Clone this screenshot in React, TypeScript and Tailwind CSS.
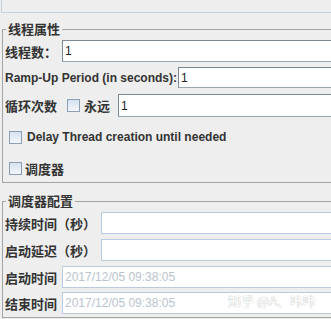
import React from "react";

const cjk = { fontFamily: '"Noto Sans CJK SC", "Liberation Sans", sans-serif' };
const lat = { fontFamily: '"Liberation Sans", Arial, sans-serif' };

function Label({ text, w }: { text: string; w: string }) {
  return (
    <span
      className={`${w} shrink-0 whitespace-nowrap text-[13px] font-bold leading-none text-[#333333]`}
      style={cjk}
    >
      {text}
    </span>
  );
}

function Field({ value, variant }: { value: string; variant: "dark" | "light" | "disabled" }) {
  const cls =
    variant === "dark"
      ? "border-t-[#7a8a99] border-l-[#7a8a99] border-b-[#9aa7b3] border-r-[#9aa7b3] text-[#222222]"
      : variant === "light"
      ? "border-[#b8cbe0] text-[#222222]"
      : "border-[#b8cbe0] text-[#b9c4cf]";
  return (
    <div
      className={`h-full flex-1 min-w-0 border bg-white pl-[2px] flex items-center text-[12px] leading-none ${cls}`}
      style={lat}
    >
      {value}
    </div>
  );
}

function Check() {
  return (
    <span className="h-[13px] w-[13px] shrink-0 border border-[#8b9fb4] bg-gradient-to-b from-[#d6e2ee] to-[#f3f6fa]" />
  );
}

export default function App() {
  return (
    <div className="relative h-[319px] w-[331px] overflow-hidden bg-[#eeeeee]">
      <div className="ml-[1px] h-[13px] border-b border-l border-[#c3d2e0]" />

      <fieldset className="ml-[2px] mt-[8px] w-[420px] border border-[#a3a3a3] px-[2px] pb-[2px]">
        <legend className="ml-[1px] px-[2px] text-[13px] font-bold leading-[16px] text-[#333333]" style={cjk}>
          线程属性
        </legend>
        <div className="mt-[3px] flex h-[22px] items-center">
          <Label text="线程数：" w="w-[57px]" />
          <Field value="1" variant="dark" />
        </div>
        <div className="mt-[5px] flex h-[21px] items-center">
          <span
            className="w-[173px] shrink-0 whitespace-nowrap text-[12px] font-bold leading-none text-[#333333]"
            style={lat}
          >
            Ramp-Up Period (in seconds):
          </span>
          <Field value="1" variant="dark" />
        </div>
        <div className="mt-[6px] flex h-[23px] items-center">
          <Label text="循环次数" w="w-[62px]" />
          <Check />
          <span className="ml-[4px] w-[34px] shrink-0 text-[13px] font-bold leading-none text-[#333333]" style={cjk}>
            永远
          </span>
          <Field value="1" variant="dark" />
        </div>
        <div className="mt-[8px] flex h-[24px] items-center pl-[4px]">
          <Check />
          <span className="ml-[5px] whitespace-nowrap text-[12px] font-bold leading-none text-[#333333]" style={lat}>
            Delay Thread creation until needed
          </span>
        </div>
        <div className="mt-[7px] flex h-[24px] items-center pl-[4px]">
          <Check />
          <span className="ml-[3px] text-[13px] font-bold leading-none text-[#333333]" style={cjk}>
            调度器
          </span>
        </div>
      </fieldset>

      <fieldset className="ml-[2px] mt-[10px] w-[420px] border border-[#a3a3a3] px-[2px] pb-[3px]">
        <legend className="ml-[1px] px-[2px] text-[13px] font-bold leading-[16px] text-[#333333]" style={cjk}>
          调度器配置
        </legend>
        <div className="mt-[3px] flex h-[22px] items-center">
          <Label text="持续时间（秒）" w="w-[96px]" />
          <Field value="" variant="light" />
        </div>
        <div className="mt-[5px] flex h-[22px] items-center">
          <Label text="启动延迟（秒）" w="w-[96px]" />
          <Field value="" variant="light" />
        </div>
        <div className="mt-[5px] flex h-[22px] items-center">
          <Label text="启动时间" w="w-[57px]" />
          <Field value="2017/12/05 09:38:05" variant="disabled" />
        </div>
        <div className="mt-[4px] flex h-[22px] items-center">
          <Label text="结束时间" w="w-[57px]" />
          <Field value="2017/12/05 09:38:05" variant="disabled" />
        </div>
      </fieldset>

      <div
        className="absolute left-[228px] top-[294px] whitespace-nowrap text-[13px] leading-none text-white [text-shadow:0_0_1px_#9a9a9a]"
        style={cjk}
      >
        知乎 @A、咔咔
      </div>
    </div>
  );
}
